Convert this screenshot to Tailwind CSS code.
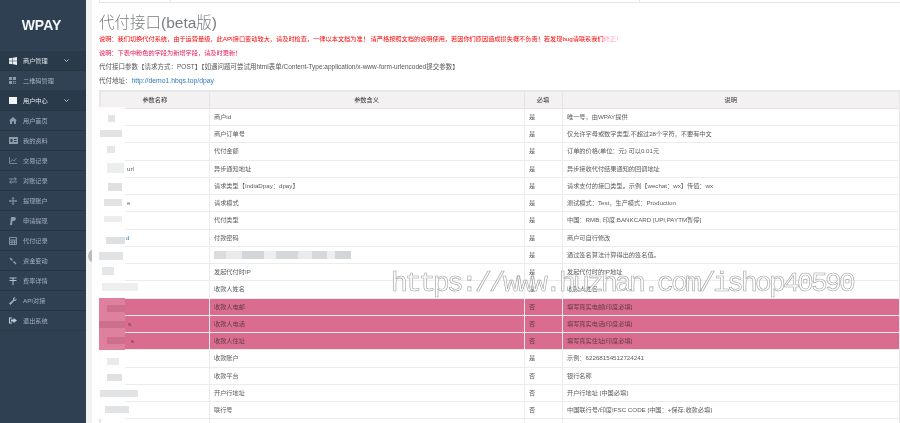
<!DOCTYPE html>
<html lang="zh-CN">
<head>
<meta charset="UTF-8" />
<title>WPAY</title>
<script src="https://cdn.jsdelivr.net/npm/@tailwindcss/browser@4"></script>
</head>
<body class="bg-white font-['Liberation_Sans','Noto_Sans_CJK_SC',sans-serif] text-[#585b5d] overflow-hidden">
<div class="flex h-[423px] w-[900px] overflow-hidden relative">

	<!-- sidebar -->
	<aside class="w-[86px] shrink-0 bg-[#2f4052] text-[6.200px] text-[#a7b1c2] blur-[0.4px]">
		<div class="h-[51px] flex items-center justify-center pr-[3px] text-[14px] font-bold text-[#f4f6f8]">WPAY</div>

		<div class="h-[20px] bg-[#293a4a] border-b border-[#263544] flex items-center pl-[9px] text-[#dfe4ea] relative">
			<svg class="w-[8px] h-[8px] mr-[6px]" viewBox="0 0 16 16" fill="#e8ecf0"><path d="M0 2.500 7 1.500V7.500H0zM8 1.400 16 0V7.500H8zM0 8.500H7V14.500L0 13.500zM8 8.500H16V16L8 14.600z"/></svg>商户管理
			<svg class="w-[5px] h-[5px] absolute left-[64px]" viewBox="0 0 10 10" fill="none" stroke="#b8c2ce" stroke-width="2"><path d="M1 3 5 7 9 3"/></svg>
		</div>
		<div class="h-[20px] bg-[#304253] border-b border-[#2a3a4a] flex items-center pl-[9px]">
			<svg class="w-[7px] h-[7px] mr-[7px]" viewBox="0 0 16 16" fill="#8e9aa9"><path d="M0 0H7V7H0zM9 0H16V7H9zM0 9H7V16H0zM9 9H12V12H9zM13 13H16V16H13zM13 9H16V11H13zM9 13H11V16H9z"/></svg>二维码管理
		</div>
		<div class="h-[20px] bg-[#293a4a] border-b border-[#263544] flex items-center pl-[9px] text-[#e6eaee] relative">
			<svg class="w-[8px] h-[7px] mr-[6px]" viewBox="0 0 16 14" fill="#f2f4f6"><path d="M0 0H16V14H0z"/></svg>用户中心
			<svg class="w-[5px] h-[5px] absolute left-[64px]" viewBox="0 0 10 10" fill="none" stroke="#b8c2ce" stroke-width="2"><path d="M1 3 5 7 9 3"/></svg>
		</div>

		<div class="h-[20px] border-b border-[#263544] flex items-center pl-[9px]">
			<svg class="w-[8px] h-[7px] mr-[6px]" viewBox="0 0 16 14" fill="#8e9aa9"><path d="M8 0 16 7H14V14H10V9H6V14H2V7H0z"/></svg>用户首页
		</div>
		<div class="h-[20px] border-b border-[#263544] flex items-center pl-[9px]">
			<svg class="w-[9px] h-[7px] mr-[5px]" viewBox="0 0 18 14" fill="#8e9aa9"><path fill-rule="evenodd" d="M0 0H18V14H0zM3 4V10H7V4zM10 4V6H15V4zM10 8V10H15V8z"/></svg>我的资料
		</div>
		<div class="h-[20px] border-b border-[#263544] flex items-center pl-[9px]">
			<svg class="w-[8px] h-[7px] mr-[6px]" viewBox="0 0 16 14" fill="none" stroke="#8e9aa9" stroke-width="1.500"><path d="M1 0V13H16M3 10 7 5 10 8 15 2"/></svg>交易记录
		</div>
		<div class="h-[20px] border-b border-[#263544] flex items-center pl-[9px]">
			<svg class="w-[8px] h-[7px] mr-[6px]" viewBox="0 0 16 14" fill="none" stroke="#8e9aa9" stroke-width="1.800"><path d="M0 4H14M11 1 15 4 11 7M16 10H2M5 7 1 10 5 13"/></svg>对账记录
		</div>
		<div class="h-[20px] border-b border-[#263544] flex items-center pl-[9px]">
			<svg class="w-[8px] h-[8px] mr-[6px]" viewBox="0 0 16 16" fill="none" stroke="#8e9aa9" stroke-width="2"><path d="M8 1V15M1 8H15M6 3 8 1 10 3M6 13 8 15 10 13M3 6 1 8 3 10M13 6 15 8 13 10"/></svg>提现账户
		</div>
		<div class="h-[20px] border-b border-[#263544] flex items-center pl-[9px]">
			<svg class="w-[8px] h-[8px] mr-[6px]" viewBox="0 0 16 16" fill="#8e9aa9"><path d="M4 0H11C15 0 15 7 10 8H7L6 16H2z"/></svg>申请提现
		</div>
		<div class="h-[20px] border-b border-[#263544] flex items-center pl-[9px]">
			<svg class="w-[8px] h-[8px] mr-[6px]" viewBox="0 0 16 16" fill="none" stroke="#8e9aa9" stroke-width="1.800"><path d="M1 1H15V15H1zM1 6H15M6 6V15M11 6V15M1 10.500H15"/></svg>代付记录
		</div>
		<div class="h-[20px] border-b border-[#263544] flex items-center pl-[9px]">
			<svg class="w-[8px] h-[8px] mr-[6px]" viewBox="0 0 16 16" fill="none" stroke="#8e9aa9" stroke-width="3"><path d="M2 2 7 7M9 9 14 14"/></svg>资金变动
		</div>
		<div class="h-[20px] border-b border-[#263544] flex items-center pl-[9px]">
			<svg class="w-[8px] h-[8px] mr-[6px]" viewBox="0 0 16 16" fill="none" stroke="#b4bdc9" stroke-width="2"><path d="M1 2H15M1 7H15M8 2V16"/></svg>费率详情
		</div>
		<div class="h-[20px] border-b border-[#263544] flex items-center pl-[9px]">
			<svg class="w-[8px] h-[8px] mr-[6px]" viewBox="0 0 16 16" fill="#a2adba"><path d="M15 3 12 6 10 4 13 1C10 0 7 2 8 6L0 13 3 16 10 8C14 9 16 6 15 3z"/></svg>API对接
		</div>
		<div class="h-[20px] border-b border-[#2b3b4b] flex items-center pl-[9px]">
			<svg class="w-[8px] h-[7px] mr-[6px]" viewBox="0 0 16 14" fill="#c4ccd6"><path d="M0 1H6V3H2V11H6V13H0zM9 2 16 7 9 12V9H4V5H9z"/></svg>退出系统
		</div>
	</aside>

	<!-- gutter with collapse handle -->
	<div class="w-[6px] shrink-0 bg-[#f3f3f4] relative">
		<div class="absolute left-[2px] top-[249px] w-[8px] h-[14px] rounded-l-full bg-[#b8bcc0]"></div>
	</div>

	<!-- content -->
	<main class="flex-1 bg-white pl-[7px] pr-0 text-[6.200px] leading-[14px] blur-[0.4px] relative">
		<div class="h-[3px] border-b border-[#e7e7e7] flex">
			<div class="w-[72px] border-x border-[#e7e7e7]"></div>
			<div class="w-[469px] border-r border-[#e7e7e7]"></div>
		</div>
		<h1 class="mt-[9px] h-[20px] text-[15.500px] leading-[22px] font-light text-[#7a7d7f]">代付接口(beta版)</h1>
		<p class="text-[#f00] whitespace-nowrap">说明：我们切换代付系统，由于运营量级，此API接口变动较大，请及时检查，一律以本文档为准！ 请严格按照文档的说明使用，若因你们原因造成损失概不负责！若发现bug请联系我们<span class="text-[#ffa8c4]">修正！</span></p>
		<p class="text-[#f0114f]">说明：下表中粉色的字段为新增字段，请及时更新！</p>
		<p class="text-[#555] text-[6.500px]">代付接口参数【请求方式：POST】【如遇问题可尝试用html表单/Content-Type:application/x-www-form-urlencoded提交参数】</p>
		<p class="text-[#555] text-[6.500px]">代付地址：<a class="text-[#337ab7] text-[6.800px]">http://demo1.hbqs.top/dpay</a></p>

		<table class="mt-[2px] w-[800px] table-fixed border-collapse border-2 border-[#e7e7e7] [&_td]:h-[17.250px] [&_td]:border [&_td]:border-[#ececec] [&_td]:px-[4.500px] [&_td]:py-0 [&_td]:leading-none [&_th]:h-[17.250px] [&_th]:border [&_th]:border-[#e4e4e4] [&_th]:font-normal [&_th]:text-[#333] [&_th]:p-0">
			<colgroup><col class="w-[109px]" /><col class="w-[315px]" /><col class="w-[38px]" /><col class="w-[338px]" /></colgroup>
			<thead>
				<tr class="bg-[#f3f1f1]"><th>参数名称</th><th>参数含义</th><th>必填</th><th>说明</th></tr>
			</thead>
			<tbody>
				<tr><td></td><td>商户id</td><td>是</td><td>唯一号，由WPAY提供</td></tr>
				<tr><td></td><td>商户订单号</td><td>是</td><td>仅允许字母或数字类型,不超过28个字符，不要有中文</td></tr>
				<tr><td></td><td>代付金额</td><td>是</td><td>订单的价格(单位：元) 可以0.01元</td></tr>
				<tr><td class="pl-[26px]!">url</td><td>异步通知地址</td><td>是</td><td>异步接收代付结果通知的回调地址</td></tr>
				<tr><td></td><td>请求类型【IndiaDpay：dpay】</td><td>是</td><td>请求支付的接口类型。示例【wechat：wx】传值：wx</td></tr>
				<tr><td class="pl-[26px]!">e</td><td>请求模式</td><td>是</td><td>测试模式：Test，生产模式：Production</td></tr>
				<tr><td></td><td>代付类型</td><td>是</td><td>中国：RMB; 印度:BANKCARD [UPI,PAYTM暂停]</td></tr>
				<tr><td class="pl-[25px]! text-[#337ab7]">d</td><td>付款密码</td><td>是</td><td>商户可自行修改</td></tr>
				<tr>
					<td></td>
					<td><div class="flex h-[8px] w-[137px] bg-[#e8eaeb]"><span class="w-[12px] bg-[#dadcde]"></span><span class="w-[16px]"></span><span class="w-[22px] bg-[#d3d6d8]"></span><span class="w-[12px] bg-[#edeeef]"></span><span class="w-[22px] bg-[#d5d8da]"></span><span class="w-[14px]"></span><span class="w-[15px] bg-[#d6d9db]"></span><span class="w-[8px] bg-[#edeeef]"></span><span class="w-[16px] bg-[#d3d6d8]"></span></div></td>
					<td>是</td><td>通过签名算法计算得出的签名值。</td>
				</tr>
				<tr><td></td><td>发起代付时IP</td><td>是</td><td>发起代付时的IP地址</td></tr>
				<tr><td></td><td>收款人姓名</td><td>是</td><td>收款人姓名</td></tr>
				<tr class="bg-[#da6d8f] text-[#5f3a4a] [&_td]:border-[#d9c9ce]"><td></td><td>收款人电邮</td><td>否</td><td>填写真实电邮[印度必填]</td></tr>
				<tr class="bg-[#da6d8f] text-[#5f3a4a] [&_td]:border-[#d9c9ce]"><td class="pl-[27px]!">s</td><td>收款人电话</td><td>否</td><td>填写真实电话[印度必填]</td></tr>
				<tr class="bg-[#da6d8f] text-[#5f3a4a] [&_td]:border-[#d9c9ce]"><td class="pl-[30px]!">s</td><td>收款人住址</td><td>否</td><td>填写真实住址[印度必填]</td></tr>
				<tr><td></td><td>收款账户</td><td>是</td><td>示例：62268154512724241</td></tr>
				<tr><td></td><td>收款平台</td><td>否</td><td>银行名称</td></tr>
				<tr><td></td><td>开户行地址</td><td>否</td><td>开户行地址 [中国必填]</td></tr>
				<tr><td></td><td>联行号</td><td>否</td><td>中国联行号/印度IFSC CODE [中国：+保存;收款必填]</td></tr>
				<tr><td></td><td></td><td></td><td></td></tr>
			</tbody>
		</table>

		<!-- mosaic over the first column -->
		<div class="absolute left-[7px] top-[107px] w-[26px] h-[312px] bg-white/90"></div>
		<div class="absolute left-[7px] top-[298px] w-[26px] h-[52px] bg-[#e0809f]"></div>
		<div class="absolute left-[16px] top-[115px] w-[7px] h-[7px] bg-[#e2e3e4]"></div>
		<div class="absolute left-[8px] top-[130px] w-[22px] h-[7px] bg-[#e2e3e4]"></div>
		<div class="absolute left-[15px] top-[146px] w-[8px] h-[7px] bg-[#e5e6e7]"></div>
		<div class="absolute left-[15px] top-[163px] w-[17px] h-[10px] bg-[#eceded]"></div>
		<div class="absolute left-[16px] top-[183px] w-[14px] h-[8px] bg-[#dfe0e1]"></div>
		<div class="absolute left-[12px] top-[199px] w-[18px] h-[7px] bg-[#e2e3e4]"></div>
		<div class="absolute left-[12px] top-[216px] w-[18px] h-[6px] bg-[#eceded]"></div>
		<div class="absolute left-[14px] top-[237px] w-[19px] h-[7px] bg-[#dfe0e1]"></div>
		<div class="absolute left-[7px] top-[252px] w-[24px] h-[8px] bg-[#e2e3e4]"></div>
		<div class="absolute left-[10px] top-[267px] w-[12px] h-[8px] bg-[#e5e6e7]"></div>
		<div class="absolute left-[10px] top-[283px] w-[36px] h-[8px] bg-[#eeeeef]"></div>
		<div class="absolute left-[15px] top-[305px] w-[19px] h-[7px] bg-[#cd7090]"></div>
		<div class="absolute left-[7px] top-[321px] w-[26px] h-[7px] bg-[#cd7090]"></div>
		<div class="absolute left-[15px] top-[337px] w-[18px] h-[7px] bg-[#cd7090]"></div>
		<div class="absolute left-[15px] top-[358px] w-[12px] h-[7px] bg-[#e9eaeb]"></div>
		<div class="absolute left-[15px] top-[374px] w-[15px] h-[7px] bg-[#dfe0e1]"></div>
		<div class="absolute left-[8px] top-[390px] w-[38px] h-[7px] bg-[#e2e3e4]"></div>
		<div class="absolute left-[13px] top-[406px] w-[24px] h-[7px] bg-[#e2e3e4]"></div>
	</main>

	<!-- watermark -->
	<div class="absolute left-[391px] top-[268px] font-['Liberation_Mono',monospace] text-[28px] leading-[32px] tracking-[-2.800px] whitespace-nowrap text-white/70 blur-[0.3px] [-webkit-text-stroke:0.6px_#a0a0a0]">https://www.huzhan.com/ishop40590</div>
</div>
</body>
</html>
